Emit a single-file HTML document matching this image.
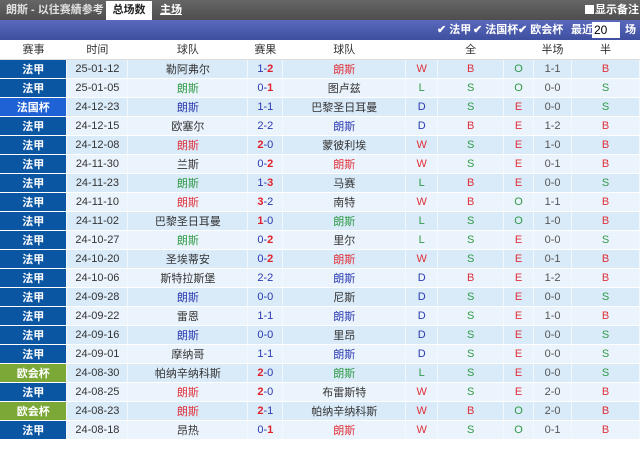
<!DOCTYPE html>
<html><head><meta charset="utf-8">
<style>
*{margin:0;padding:0;box-sizing:border-box}
body{width:640px;height:455px;background:#fff;font-family:"Liberation Sans","Noto Sans CJK SC",sans-serif;font-size:11px;overflow:hidden;position:relative}
.top{position:absolute;left:0;top:0;width:640px;height:20px;background:linear-gradient(#666,#4e4e4e)}
.top .t1{position:absolute;left:6px;top:4px;color:#e0e0e0;font-size:11px;font-weight:bold;line-height:12px}
.top .tab{position:absolute;left:106px;top:1px;width:46px;height:19px;background:#fff;color:#222;font-weight:bold;text-align:center;line-height:19px;font-size:11px}
.top .t3{position:absolute;left:160px;top:4px;color:#fff;font-weight:bold;text-decoration:underline;line-height:12px}
.top .t4{position:absolute;left:585px;top:4px;color:#fff;font-weight:bold;line-height:12px}
.top .t4 i{display:inline-block;width:9px;height:9px;background:#fff;vertical-align:-1px;margin-right:1px}
.bar{position:absolute;left:0;top:20px;width:640px;height:20px;background:linear-gradient(#5a69bb,#3e4fa0);color:#fff;font-weight:bold;font-size:11px}
.bar span{position:absolute;top:4px;line-height:12px;white-space:nowrap}
.sel{position:absolute;left:592px;top:2px;width:28px;height:16px;background:#fff;color:#000;font-weight:normal;font-size:12px;line-height:16px;padding-left:2px}
table{position:absolute;left:0;top:40px;border-collapse:collapse;table-layout:fixed}
td,th{height:19px;text-align:center;font-size:11px;padding:0;white-space:nowrap;overflow:hidden}
th{font-weight:normal;color:#333;background:#fff;height:19px;border-bottom:1px solid #ddd}
tr.a td{background:#d9eaf8}
tr.b td{background:#ebf4fc}
td{border-right:1px solid #f4f8fc;border-bottom:1px solid #fff;color:#333}
td.lg{color:#fff;font-weight:bold;background:#0b56a3!important;font-size:11px}
td.fc{background:#1f62d6!important}
td.ec{background:#7ba837!important}
.r{color:#e0303a}.g{color:#2f9a46}.u{color:#2a39b0}.h{color:#555}
.s b{color:#e0202a}.s{color:#2a39b0}
</style></head><body>
<div class="top"><span class="t1">朗斯 - 以往赛績参考</span><span class="tab">总场数</span><span class="t3">主场</span><span class="t4"><i></i>显示备注</span></div>
<div class="bar"><span style="left:437px">✔ 法甲</span><span style="left:473px">✔ 法国杯</span><span style="left:518px">✔ 欧会杯</span><span style="left:571px">最近</span><div class="sel">20 ⌄</div><span style="left:625px">场</span></div>
<table>
<colgroup><col style="width:67px"><col style="width:61px"><col style="width:120px"><col style="width:35px"><col style="width:123px"><col style="width:32px"><col style="width:66px"><col style="width:30px"><col style="width:38px"><col style="width:68px"></colgroup>
<tr><th>赛事</th><th>时间</th><th>球队</th><th>赛果</th><th>球队</th><th></th><th>全</th><th></th><th>半场</th><th>半</th></tr>
<tr class="a"><td class="lg">法甲</td><td>25-01-12</td><td>勒阿弗尔</td><td class="s">1-<b>2</b></td><td class="r">朗斯</td><td class="r">W</td><td class="r">B</td><td class="g">O</td><td class="h">1-1</td><td class="r">B</td></tr>
<tr class="b"><td class="lg">法甲</td><td>25-01-05</td><td class="g">朗斯</td><td class="s">0-<b>1</b></td><td>图卢兹</td><td class="g">L</td><td class="g">S</td><td class="g">O</td><td class="h">0-0</td><td class="g">S</td></tr>
<tr class="a"><td class="lg fc">法国杯</td><td>24-12-23</td><td class="u">朗斯</td><td class="s">1-1</td><td>巴黎圣日耳曼</td><td class="u">D</td><td class="g">S</td><td class="r">E</td><td class="h">0-0</td><td class="g">S</td></tr>
<tr class="b"><td class="lg">法甲</td><td>24-12-15</td><td>欧塞尔</td><td class="s">2-2</td><td class="u">朗斯</td><td class="u">D</td><td class="r">B</td><td class="r">E</td><td class="h">1-2</td><td class="r">B</td></tr>
<tr class="a"><td class="lg">法甲</td><td>24-12-08</td><td class="r">朗斯</td><td class="s"><b>2</b>-0</td><td>蒙彼利埃</td><td class="r">W</td><td class="g">S</td><td class="r">E</td><td class="h">1-0</td><td class="r">B</td></tr>
<tr class="b"><td class="lg">法甲</td><td>24-11-30</td><td>兰斯</td><td class="s">0-<b>2</b></td><td class="r">朗斯</td><td class="r">W</td><td class="g">S</td><td class="r">E</td><td class="h">0-1</td><td class="r">B</td></tr>
<tr class="a"><td class="lg">法甲</td><td>24-11-23</td><td class="g">朗斯</td><td class="s">1-<b>3</b></td><td>马赛</td><td class="g">L</td><td class="r">B</td><td class="r">E</td><td class="h">0-0</td><td class="g">S</td></tr>
<tr class="b"><td class="lg">法甲</td><td>24-11-10</td><td class="r">朗斯</td><td class="s"><b>3</b>-2</td><td>南特</td><td class="r">W</td><td class="r">B</td><td class="g">O</td><td class="h">1-1</td><td class="r">B</td></tr>
<tr class="a"><td class="lg">法甲</td><td>24-11-02</td><td>巴黎圣日耳曼</td><td class="s"><b>1</b>-0</td><td class="g">朗斯</td><td class="g">L</td><td class="g">S</td><td class="g">O</td><td class="h">1-0</td><td class="r">B</td></tr>
<tr class="b"><td class="lg">法甲</td><td>24-10-27</td><td class="g">朗斯</td><td class="s">0-<b>2</b></td><td>里尔</td><td class="g">L</td><td class="g">S</td><td class="r">E</td><td class="h">0-0</td><td class="g">S</td></tr>
<tr class="a"><td class="lg">法甲</td><td>24-10-20</td><td>圣埃蒂安</td><td class="s">0-<b>2</b></td><td class="r">朗斯</td><td class="r">W</td><td class="g">S</td><td class="r">E</td><td class="h">0-1</td><td class="r">B</td></tr>
<tr class="b"><td class="lg">法甲</td><td>24-10-06</td><td>斯特拉斯堡</td><td class="s">2-2</td><td class="u">朗斯</td><td class="u">D</td><td class="r">B</td><td class="r">E</td><td class="h">1-2</td><td class="r">B</td></tr>
<tr class="a"><td class="lg">法甲</td><td>24-09-28</td><td class="u">朗斯</td><td class="s">0-0</td><td>尼斯</td><td class="u">D</td><td class="g">S</td><td class="r">E</td><td class="h">0-0</td><td class="g">S</td></tr>
<tr class="b"><td class="lg">法甲</td><td>24-09-22</td><td>雷恩</td><td class="s">1-1</td><td class="u">朗斯</td><td class="u">D</td><td class="g">S</td><td class="r">E</td><td class="h">1-0</td><td class="r">B</td></tr>
<tr class="a"><td class="lg">法甲</td><td>24-09-16</td><td class="u">朗斯</td><td class="s">0-0</td><td>里昂</td><td class="u">D</td><td class="g">S</td><td class="r">E</td><td class="h">0-0</td><td class="g">S</td></tr>
<tr class="b"><td class="lg">法甲</td><td>24-09-01</td><td>摩纳哥</td><td class="s">1-1</td><td class="u">朗斯</td><td class="u">D</td><td class="g">S</td><td class="r">E</td><td class="h">0-0</td><td class="g">S</td></tr>
<tr class="a"><td class="lg ec">欧会杯</td><td>24-08-30</td><td>帕纳辛纳科斯</td><td class="s"><b>2</b>-0</td><td class="g">朗斯</td><td class="g">L</td><td class="g">S</td><td class="r">E</td><td class="h">0-0</td><td class="g">S</td></tr>
<tr class="b"><td class="lg">法甲</td><td>24-08-25</td><td class="r">朗斯</td><td class="s"><b>2</b>-0</td><td>布雷斯特</td><td class="r">W</td><td class="g">S</td><td class="r">E</td><td class="h">2-0</td><td class="r">B</td></tr>
<tr class="a"><td class="lg ec">欧会杯</td><td>24-08-23</td><td class="r">朗斯</td><td class="s"><b>2</b>-1</td><td>帕纳辛纳科斯</td><td class="r">W</td><td class="r">B</td><td class="g">O</td><td class="h">2-0</td><td class="r">B</td></tr>
<tr class="b"><td class="lg">法甲</td><td>24-08-18</td><td>昂热</td><td class="s">0-<b>1</b></td><td class="r">朗斯</td><td class="r">W</td><td class="g">S</td><td class="g">O</td><td class="h">0-1</td><td class="r">B</td></tr>
</table>
</body></html>
